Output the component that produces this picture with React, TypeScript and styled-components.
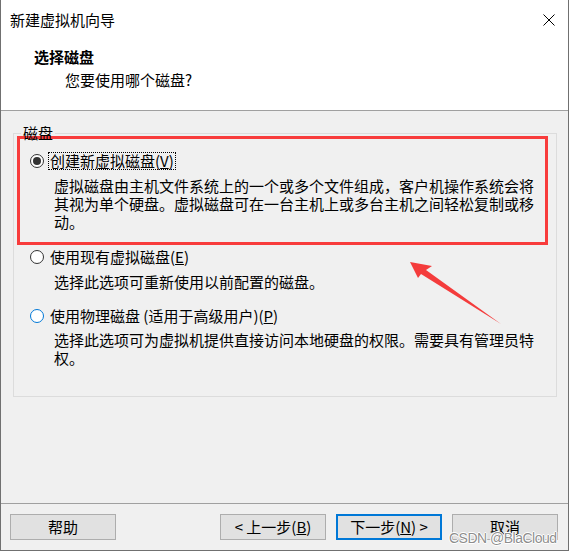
import React from "react";
import styled, { createGlobalStyle } from "styled-components";

const Global = createGlobalStyle`
  html, body { margin: 0; padding: 0; background: #ffffff; }
  * { box-sizing: border-box; }
  body { font-family: "Noto Sans CJK SC", "Noto Sans", sans-serif; color: #000; }
`;

const cjk = `"Noto Sans CJK SC", "Noto Sans", sans-serif`;

const Window = styled.div`
  position: relative;
  width: 569px;
  height: 551px;
  border: 1px solid #707070;
  border-top: none;
  display: flex;
  flex-direction: column;
  background: #ffffff;
  font-family: ${cjk};
  font-size: 15px;
  overflow: hidden;
`;

const TitleBar = styled.div`
  height: 40px;
  flex: none;
  display: flex;
  align-items: center;
  justify-content: space-between;
  padding: 0 13px 0 9px;
  line-height: 18px;
`;

const CloseIcon = styled.svg`
  width: 12px;
  height: 12px;
  display: block;
`;

const Header = styled.div`
  height: 71px;
  flex: none;
  border-bottom: 1px solid #a0a0a0;
  padding: 8px 0 0 33px;
`;

const Heading = styled.div`
  font-weight: 700;
  line-height: 18px;
`;

const SubHeading = styled.div`
  margin: 5px 0 0 31px;
  line-height: 18px;
`;

const Body = styled.div`
  flex: 1;
  background: #f0f0f0;
  padding: 13px 11px 0 12px;
`;

const GroupBox = styled.fieldset`
  margin: 0;
  padding: 0 0 29px 0;
  min-width: 0;
  border: 1px solid #dcdcdc;
`;

const Legend = styled.legend`
  margin-left: 7px;
  padding: 0 2px;
  line-height: 18px;
`;

const Highlight = styled.div`
  margin: -6px 8px 0 3px;
  border: 3px solid #f83c3c;
  padding: 13px 0 11px 0;
`;

const Option = styled.div<{ $gap: number }>`
  padding-left: 16px;
  margin-top: ${(p) => p.$gap}px;
  ${Highlight} & {
    padding-left: 10px;
    margin-top: 0;
  }
`;

const RadioRow = styled.div`
  display: flex;
  align-items: center;
  height: 18px;
`;

const Radio = styled.span<{ $checked?: boolean; $hover?: boolean }>`
  flex: none;
  width: 14px;
  height: 14px;
  border-radius: 50%;
  border: 1px solid ${(p) => (p.$hover ? "#0078d7" : "#333333")};
  background: #ffffff;
  display: flex;
  align-items: center;
  justify-content: center;
  &::after {
    content: "";
    width: 8px;
    height: 8px;
    border-radius: 50%;
    background: #333333;
    display: ${(p) => (p.$checked ? "block" : "none")};
  }
`;

const Label = styled.span<{ $focused?: boolean }>`
  margin-left: 4px;
  padding: 0 1px;
  line-height: 16px;
  border: 1px dotted ${(p) => (p.$focused ? "#000000" : "transparent")};
  white-space: nowrap;
`;

const Desc = styled.div<{ $gap: number }>`
  margin-top: ${(p) => p.$gap}px;
  padding-left: 24px;
  width: 506px;
  line-height: 18px;
`;

const Footer = styled.div`
  height: 47px;
  flex: none;
  background: #f0f0f0;
  border-top: 1px solid #a0a0a0;
  padding: 10px 10px 0 9px;
  display: flex;
  align-items: flex-start;
`;

const Spacer = styled.div`
  flex: 1;
`;

const Button = styled.button<{ $primary?: boolean }>`
  width: 106px;
  height: 26px;
  margin-left: ${(p) => (p.$primary ? "10px" : "0")};
  margin-right: ${(p) => (p.$primary ? "10px" : "0")};
  background: #e1e1e1;
  border: ${(p) => (p.$primary ? "2px solid #0078d7" : "1px solid #adadad")};
  font-family: ${cjk};
  font-size: 15px;
  line-height: 18px;
  color: #000;
  padding: 0;
  display: flex;
  align-items: center;
  justify-content: center;
`;

const Overlay = styled.svg`
  position: absolute;
  left: -1px;
  top: 0;
  width: 570px;
  height: 551px;
  pointer-events: none;
`;

const Watermark = styled.div`
  position: absolute;
  left: 448px;
  top: 529px;
  font-family: "Liberation Sans", Arial, sans-serif;
  font-size: 14px;
  letter-spacing: -0.5px;
  line-height: 18px;
  color: rgba(120, 120, 120, 0.85);
  text-shadow: 0 0 1px #fff, 1px 0 0 #fff, -1px 0 0 #fff, 0 1px 0 #fff, 0 -1px 0 #fff;
  white-space: nowrap;
`;

export default function App() {
  return (
    <>
      <Global />
      <Window>
        <TitleBar>
          <span>新建虚拟机向导</span>
          <CloseIcon viewBox="0 0 12 12">
            <path d="M0.5 0.5 L11.5 11.5 M11.5 0.5 L0.5 11.5" stroke="#000" strokeWidth="1" fill="none" />
          </CloseIcon>
        </TitleBar>
        <Header>
          <Heading>选择磁盘</Heading>
          <SubHeading>您要使用哪个磁盘?</SubHeading>
        </Header>
        <Body>
          <GroupBox>
            <Legend>磁盘</Legend>
            <Highlight>
              <Option $gap={0}>
                <RadioRow>
                  <Radio $checked />
                  <Label $focused>
                    创建新虚拟磁盘(<u>V</u>)
                  </Label>
                </RadioRow>
                <Desc $gap={7}>
                  虚拟磁盘由主机文件系统上的一个或多个文件组成，客户机操作系统会将其视为单个硬盘。虚拟磁盘可在一台主机上或多台主机之间轻松复制或移动。
                </Desc>
              </Option>
            </Highlight>
            <Option $gap={3}>
              <RadioRow>
                <Radio />
                <Label>
                  使用现有虚拟磁盘(<u>E</u>)
                </Label>
              </RadioRow>
              <Desc $gap={7}>选择此选项可重新使用以前配置的磁盘。</Desc>
            </Option>
            <Option $gap={16}>
              <RadioRow>
                <Radio $hover />
                <Label>
                  使用物理磁盘 (适用于高级用户)(<u>P</u>)
                </Label>
              </RadioRow>
              <Desc $gap={6}>
                选择此选项可为虚拟机提供直接访问本地硬盘的权限。需要具有管理员特权。
              </Desc>
            </Option>
          </GroupBox>
        </Body>
        <Footer>
          <Button>帮助</Button>
          <Spacer />
          <Button>
            &lt; 上一步(<u>B</u>)
          </Button>
          <Button $primary>
            下一步(<u>N</u>) &gt;
          </Button>
          <Button>取消</Button>
        </Footer>
        <Overlay viewBox="0 0 570 551">
          <polygon
            points="410,262 432,266 426,270 501,324 421,274 418,278"
            fill="#f43c3c"
          />
        </Overlay>
        <Watermark>CSDN @BlaCloud</Watermark>
      </Window>
    </>
  );
}
